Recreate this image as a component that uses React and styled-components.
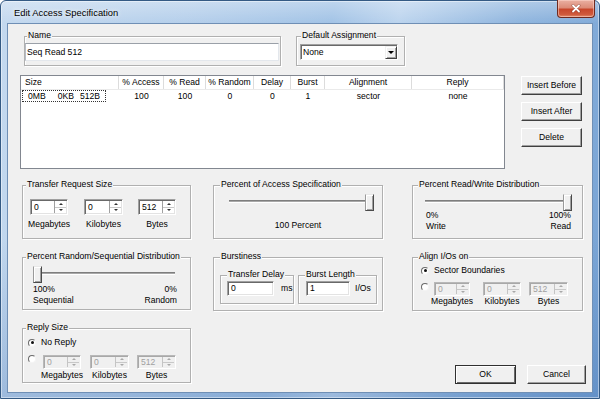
import React from "react";
import styled, { createGlobalStyle } from "styled-components";

const FONT = `"Liberation Sans", Arial, sans-serif`;

const GlobalStyle = createGlobalStyle`
  html, body { margin: 0; padding: 0; background: #ffffff; }
  body { font-family: ${FONT}; font-size: 8.6px; line-height: 11px; color: #000; }
  #root { width: 600px; height: 399px; overflow: hidden; }
  *, *::before, *::after { box-sizing: border-box; }
`;

const Window = styled.div`
  width: 600px;
  height: 399px;
  display: flex;
  flex-direction: column;
  border: 1px solid #345a84;
  border-radius: 6px 6px 0 0;
  padding: 0 7px 6px;
  box-shadow: inset 0 0 0 1px rgba(255, 255, 255, 0.45);
  background:
    linear-gradient(180deg, rgba(255,255,255,0.3) 0px, rgba(255,255,255,0) 22px, rgba(40,90,160,0) 60%, rgba(40,90,160,0.22) 100%),
    linear-gradient(100deg, #c4d9ef 0%, #b5cfeb 28%, #a2c3e6 50%, #bcd4ee 60%, #8fb5de 78%, #75a1d3 100%);
`;

const TitleBar = styled.div`
  height: 23px;
  display: flex;
  align-items: flex-start;
  justify-content: space-between;
`;

const Title = styled.span`
  font-family: ${FONT};
  font-size: 9.4px;
  line-height: 12px;
  padding: 6px 0 0 6px;
  color: #000;
  text-shadow: 0 0 4px rgba(255, 255, 255, 0.9), 0 0 8px rgba(255, 255, 255, 0.7);
`;

const CloseButton = styled.div`
  width: 38px;
  height: 18px;
  margin: -1px -3px 0 0;
  border: 1px solid #6e2a20;
  border-top: none;
  border-radius: 0 0 4px 4px;
  background: linear-gradient(180deg, #eab0a2 0%, #dc8c78 45%, #c8472c 55%, #cf5a3c 85%, #e38c6c 100%);
  box-shadow: inset 0 0 0 1px rgba(255, 220, 210, 0.5);
  display: flex;
  align-items: center;
  justify-content: center;
`;

const Client = styled.div`
  flex: 1;
  background: #f0f0f0;
  box-shadow: 0 0 0 1px #6f8fb5;
  display: flex;
  flex-direction: column;
`;

const TopRow = styled.div`
  display: flex;
  gap: 15px;
  margin: 12px 0 0 16px;
`;

const GroupBox = styled.div`
  position: relative;
  flex-shrink: 0;
  width: ${(p) => p.$w}px;
  height: ${(p) => p.$h}px;
  border: 1px solid #b0b0b0;
  box-shadow: 1px 1px 0 #ffffff, inset 1px 1px 0 #ffffff;
  padding: ${(p) => p.$pad || "0"};
  display: flex;
  flex-direction: column;
`;

const Caption = styled.span`
  position: absolute;
  top: -7px;
  left: ${(p) => p.$x}px;
  padding: 0 1px;
  background: #f0f0f0;
  line-height: 11px;
  white-space: nowrap;
`;

const TextInput = styled.div`
  width: ${(p) => p.$w}px;
  height: ${(p) => p.$h}px;
  flex-shrink: 0;
  background: #ffffff;
  border: 1px solid;
  border-color: #9aa0a8 #e3e7ec #e3e7ec #b7bcc4;
  padding-left: ${(p) => p.$pl ?? 1}px;
  display: flex;
  align-items: center;
  white-space: nowrap;
`;

const SunkenInput = styled.div`
  width: ${(p) => p.$w}px;
  height: ${(p) => p.$h}px;
  flex-shrink: 0;
  background: #ffffff;
  border: 1px solid;
  border-color: #a0a0a0 #ffffff #ffffff #a0a0a0;
  box-shadow: inset 1px 1px 0 #696969, inset -1px -1px 0 #e3e3e3;
  padding-left: 3px;
  display: flex;
  align-items: center;
`;

const Select = styled.div`
  width: ${(p) => p.$w}px;
  height: ${(p) => p.$h}px;
  display: flex;
  background: #ffffff;
  border: 1px solid;
  border-color: #a0a0a0 #ffffff #ffffff #a0a0a0;
  box-shadow: inset 1px 1px 0 #696969;
`;

const SelectValue = styled.span`
  flex: 1;
  padding-left: 2px;
  display: flex;
  align-items: center;
`;

const DropButton = styled.span`
  width: 12px;
  margin: 1px 0 0 0;
  background: #f0f0f0;
  border: 1px solid;
  border-color: #f0f0f0 #404040 #404040 #f0f0f0;
  box-shadow: inset 1px 1px 0 #ffffff, inset -1px -1px 0 #a0a0a0;
  display: flex;
  align-items: center;
  justify-content: center;
  &::after {
    content: "";
    border-left: 3px solid transparent;
    border-right: 3px solid transparent;
    border-top: 3px solid #000;
  }
`;

const MiddleRow = styled.div`
  display: flex;
  gap: 16px;
  margin: 9px 0 0 12px;
`;

const ListView = styled.div`
  width: 485px;
  height: 94px;
  flex-shrink: 0;
  background: #ffffff;
  border: 1px solid #828790;
  display: flex;
  flex-direction: column;
`;

const HeaderRow = styled.div`
  display: flex;
  height: 14px;
  border-bottom: 1px solid #eaeaea;
`;

const HeaderCell = styled.div`
  width: ${(p) => p.$w}px;
  flex-shrink: 0;
  border-right: 1px solid #dcdcdc;
  text-align: ${(p) => (p.$left ? "left" : "center")};
  padding-left: ${(p) => (p.$left ? 4 : 0)}px;
  line-height: 13px;
  white-space: nowrap;
`;

const DataRow = styled.div`
  display: flex;
  height: 12px;
  align-items: center;
`;

const DataCell = styled.div`
  width: ${(p) => p.$w}px;
  flex-shrink: 0;
  text-align: center;
  white-space: nowrap;
`;

const FocusCell = styled.div`
  width: 84px;
  height: 12px;
  margin: 0 13px 0 1px;
  border: 1px dotted #333;
  display: flex;
  align-items: center;
  padding-left: 5px;
  flex-shrink: 0;
`;

const SizePart = styled.span`
  margin-right: ${(p) => p.$mr}px;
`;

const ButtonStack = styled.div`
  display: flex;
  flex-direction: column;
  gap: 7px;
  margin-top: 1px;
`;

const Button = styled.div`
  width: ${(p) => p.$w}px;
  height: 19px;
  background: #f0f0f0;
  border: 1px solid;
  border-color: ${(p) => (p.$default ? "#303030" : "#ffffff #404040 #404040 #ffffff")};
  box-shadow: ${(p) =>
    p.$default
      ? "inset 1px 1px 0 #ffffff, inset -1px -1px 0 #696969"
      : "inset -1px -1px 0 #a0a0a0"};
  display: flex;
  align-items: center;
  justify-content: center;
  white-space: nowrap;
`;

const Lower = styled.div`
  flex: 1;
  display: flex;
  margin: 16px 0 0 14px;
  padding-bottom: 8px;
`;

const Column = styled.div`
  width: ${(p) => p.$w}px;
  margin-left: ${(p) => p.$ml || 0}px;
  display: flex;
  flex-direction: column;
  gap: 18px;
  flex-shrink: 0;
`;

const SpinRow = styled.div`
  display: flex;
  align-items: flex-start;
  gap: ${(p) => p.$gap || 0}px;
  margin-top: ${(p) => p.$mt || 0}px;
`;

const SpinField = styled.div`
  display: flex;
  flex-direction: column;
  align-items: center;
  width: ${(p) => p.$w}px;
  flex-shrink: 0;
  margin-left: ${(p) => p.$ml || 0}px;
`;

const SpinBox = styled.div`
  width: ${(p) => p.$w}px;
  height: ${(p) => p.$h}px;
  display: flex;
  background: ${(p) => (p.$disabled ? "#f0f0f0" : "#ffffff")};
  border: 1px solid;
  border-color: ${(p) => (p.$disabled ? "#b8b8b8 #ffffff #ffffff #b8b8b8" : "#a0a0a0 #ffffff #ffffff #a0a0a0")};
  box-shadow: ${(p) =>
    p.$disabled ? "inset 1px 1px 0 #a8a8a8" : "inset 1px 1px 0 #696969, inset -1px -1px 0 #e3e3e3"};
`;

const SpinValue = styled.span`
  flex: 1;
  padding-left: 3px;
  display: flex;
  align-items: center;
  color: ${(p) => (p.$disabled ? "#a0a0a0" : "#000")};
`;

const SpinButtons = styled.div`
  width: 12px;
  margin: 1px 1px 1px 0;
  display: flex;
  flex-direction: column;
  border-left: 1px solid ${(p) => (p.$disabled ? "#c4c4c4" : "#a0a0a0")};
`;

const SpinArrow = styled.span`
  flex: 1;
  display: flex;
  align-items: center;
  justify-content: center;
  border-bottom: ${(p) => (p.$up ? "1px solid #c8c8c8" : "none")};
  &::after {
    content: "";
    border-left: 2px solid transparent;
    border-right: 2px solid transparent;
    ${(p) => (p.$up ? "border-bottom" : "border-top")}: 2px solid ${(p) => (p.$disabled ? "#a8a8a8" : "#303030")};
  }
`;

const FieldLabel = styled.span`
  margin-top: ${(p) => p.$mt || 0}px;
  white-space: nowrap;
`;

const SliderWrap = styled.div`
  position: relative;
  width: ${(p) => p.$w}px;
  height: 17px;
  margin-left: ${(p) => p.$ml}px;
  flex-shrink: 0;
`;

const Track = styled.div`
  position: absolute;
  left: 4px;
  right: 4px;
  top: 6px;
  height: 3px;
  border-top: 1px solid #7e7e7e;
  background: #a8a8a8;
  border-bottom: 1px solid #ffffff;
`;

const Thumb = styled.div`
  position: absolute;
  top: 0;
  width: 9px;
  height: 17px;
  background: #f0f0f0;
  border: 1px solid;
  border-color: #e8e8e8 #4a4a4a #4a4a4a #9a9a9a;
  box-shadow: inset 1px 1px 0 #ffffff, inset -1px -1px 0 #a0a0a0;
`;

const CenterLabel = styled.div`
  text-align: center;
  margin-top: ${(p) => p.$mt || 0}px;
`;

const EndLabels = styled.div`
  display: flex;
  justify-content: space-between;
  margin-top: ${(p) => p.$mt || 0}px;
  padding: ${(p) => p.$pad};
`;

const LabelStack = styled.div`
  display: flex;
  flex-direction: column;
  align-items: ${(p) => (p.$right ? "flex-end" : "flex-start")};
`;

const InnerRow = styled.div`
  display: flex;
  gap: ${(p) => p.$gap || 0}px;
`;

const UnitRow = styled.div`
  display: flex;
  align-items: center;
`;

const Unit = styled.span`
  margin-left: ${(p) => p.$ml}px;
  white-space: nowrap;
`;

const RadioRow = styled.div`
  display: flex;
  align-items: center;
  height: 11px;
  gap: 5px;
`;

const Radio = styled.span`
  width: 8px;
  height: 8px;
  flex-shrink: 0;
  border-radius: 50%;
  border: 1px solid;
  border-color: ${(p) => (p.$disabled ? "#a8a8a8 #f4f4f4 #f4f4f4 #a8a8a8" : "#6a6a6a #f4f4f4 #f4f4f4 #6a6a6a")};
  background: ${(p) => (p.$disabled ? "#f0f0f0" : "#ffffff")};
  display: flex;
  align-items: center;
  justify-content: center;
  margin-top: ${(p) => p.$mt || 0}px;
  &::after {
    content: "";
    width: 3px;
    height: 3px;
    border-radius: 50%;
    background: ${(p) => (p.$checked ? "#111" : "transparent")};
  }
`;

const DialogButtons = styled.div`
  margin-top: auto;
  display: flex;
  justify-content: flex-end;
  gap: 11px;
  margin-right: -3px;
`;

function Spinner({ value, w, h, disabled }) {
  return (
    <SpinBox $w={w} $h={h} $disabled={disabled}>
      <SpinValue $disabled={disabled}>{value}</SpinValue>
      <SpinButtons $disabled={disabled}>
        <SpinArrow $up $disabled={disabled} />
        <SpinArrow $disabled={disabled} />
      </SpinButtons>
    </SpinBox>
  );
}

function Slider({ w, ml, value }) {
  const left = Math.round((value / 100) * (w - 9));
  return (
    <SliderWrap $w={w} $ml={ml}>
      <Track />
      <Thumb style={{ left }} />
    </SliderWrap>
  );
}

const columns = [
  { key: "size", label: "Size", w: 98, left: true },
  { key: "access", label: "% Access", w: 45 },
  { key: "read", label: "% Read", w: 42 },
  { key: "random", label: "% Random", w: 48 },
  { key: "delay", label: "Delay", w: 37 },
  { key: "burst", label: "Burst", w: 34 },
  { key: "align", label: "Alignment", w: 87 },
  { key: "reply", label: "Reply", w: 92 },
];

const row = { access: "100", read: "100", random: "0", delay: "0", burst: "1", align: "sector", reply: "none" };

function SizeFields({ h, disabled, widths, gaps, labelGap }) {
  const names = [
    ["Megabytes", "0"],
    ["Kilobytes", "0"],
    ["Bytes", "512"],
  ];
  return names.map(([label, value], i) => (
    <SpinField key={label} $w={widths[i]} $ml={gaps[i]}>
      <Spinner value={value} w={widths[i]} h={h} disabled={disabled} />
      <FieldLabel $mt={labelGap}>{label}</FieldLabel>
    </SpinField>
  ));
}

export default function App() {
  return (
    <>
      <GlobalStyle />
      <Window>
        <TitleBar>
          <Title>Edit Access Specification</Title>
          <CloseButton aria-label="Close">
            <svg width="10" height="9" viewBox="0 0 10 9">
              <path d="M2 1.5 L8 7.5 M8 1.5 L2 7.5" stroke="#5a1a10" strokeWidth="3" strokeLinecap="round" opacity="0.45" />
              <path d="M2 1.5 L8 7.5 M8 1.5 L2 7.5" stroke="#ffffff" strokeWidth="1.8" strokeLinecap="round" />
            </svg>
          </CloseButton>
        </TitleBar>
        <Client>
          <TopRow>
            <GroupBox $w={257} $h={30} $pad="6px 0 0 0">
              <Caption $x={2}>Name</Caption>
              <TextInput $w={254} $h={18} $pl={1}>Seq Read 512</TextInput>
            </GroupBox>
            <GroupBox $w={109} $h={30} $pad="7px 0 0 3px">
              <Caption $x={4}>Default Assignment</Caption>
              <Select $w={98} $h={16}>
                <SelectValue>None</SelectValue>
                <DropButton />
              </Select>
            </GroupBox>
          </TopRow>

          <MiddleRow>
            <ListView>
              <HeaderRow>
                {columns.map((c) => (
                  <HeaderCell key={c.key} $w={c.w} $left={c.left}>
                    {c.label}
                  </HeaderCell>
                ))}
              </HeaderRow>
              <DataRow>
                <FocusCell>
                  <SizePart $mr={12}>0MB</SizePart>
                  <SizePart $mr={6}>0KB</SizePart>
                  <SizePart $mr={0}>512B</SizePart>
                </FocusCell>
                {columns.slice(1).map((c) => (
                  <DataCell key={c.key} $w={c.w}>
                    {row[c.key]}
                  </DataCell>
                ))}
              </DataRow>
            </ListView>
            <ButtonStack>
              <Button $w={61}>Insert Before</Button>
              <Button $w={61}>Insert After</Button>
              <Button $w={61}>Delete</Button>
            </ButtonStack>
          </MiddleRow>

          <Lower>
            <Column $w={169}>
              <GroupBox $w={169} $h={54} $pad="13px 0 0 0">
                <Caption $x={3}>Transfer Request Size</Caption>
                <SpinRow>
                  <SizeFields h={16} widths={[38, 39, 38]} gaps={[7, 16, 15]} labelGap={4} />
                </SpinRow>
              </GroupBox>
              <GroupBox $w={169} $h={53} $pad="8px 0 0 0">
                <Caption $x={3}>Percent Random/Sequential Distribution</Caption>
                <Slider w={146} ml={10} value={0} />
                <EndLabels $mt={1} $pad="0 13px 0 10px">
                  <LabelStack>
                    <span>100%</span>
                    <span>Sequential</span>
                  </LabelStack>
                  <LabelStack $right>
                    <span>0%</span>
                    <span>Random</span>
                  </LabelStack>
                </EndLabels>
              </GroupBox>
              <GroupBox $w={169} $h={55} $pad="8px 0 0 5px">
                <Caption $x={3}>Reply Size</Caption>
                <RadioRow>
                  <Radio $checked />
                  <span>No Reply</span>
                </RadioRow>
                <SpinRow $mt={7}>
                  <Radio $mt={0} />
                  <SizeFields h={14} disabled widths={[38, 39, 39]} gaps={[7, 9, 8]} labelGap={1} />
                </SpinRow>
              </GroupBox>
            </Column>

            <Column $w={170} $ml={22}>
              <GroupBox $w={170} $h={54} $pad="8px 0 0 0">
                <Caption $x={6}>Percent of Access Specification</Caption>
                <Slider w={149} ml={11} value={100} />
                <CenterLabel $mt={9}>100 Percent</CenterLabel>
              </GroupBox>
              <GroupBox $w={170} $h={54} $pad="17px 0 0 6px">
                <Caption $x={6}>Burstiness</Caption>
                <InnerRow $gap={4}>
                  <GroupBox $w={74} $h={29} $pad="5px 0 0 6px">
                    <Caption $x={6}>Transfer Delay</Caption>
                    <UnitRow>
                      <SunkenInput $w={47} $h={15}>0</SunkenInput>
                      <Unit $ml={7}>ms</Unit>
                    </UnitRow>
                  </GroupBox>
                  <GroupBox $w={79} $h={29} $pad="5px 0 0 7px">
                    <Caption $x={6}>Burst Length</Caption>
                    <UnitRow>
                      <SunkenInput $w={44} $h={15}>1</SunkenInput>
                      <Unit $ml={5}>I/Os</Unit>
                    </UnitRow>
                  </GroupBox>
                </InnerRow>
              </GroupBox>
            </Column>

            <Column $w={171} $ml={29}>
              <GroupBox $w={171} $h={54} $pad="8px 0 0 0">
                <Caption $x={5}>Percent Read/Write Distribution</Caption>
                <Slider w={151} ml={8} value={100} />
                <EndLabels $mt={-1} $pad="0 11px 0 13px">
                  <LabelStack>
                    <span>0%</span>
                    <span>Write</span>
                  </LabelStack>
                  <LabelStack $right>
                    <span>100%</span>
                    <span>Read</span>
                  </LabelStack>
                </EndLabels>
              </GroupBox>
              <GroupBox $w={171} $h={54} $pad="7px 0 0 8px">
                <Caption $x={5}>Align I/Os on</Caption>
                <RadioRow>
                  <Radio $checked />
                  <span>Sector Boundaries</span>
                </RadioRow>
                <SpinRow $mt={6}>
                  <Radio $mt={1} />
                  <SizeFields h={14} disabled widths={[36, 38, 39]} gaps={[5, 13, 8]} labelGap={0} />
                </SpinRow>
              </GroupBox>
              <DialogButtons>
                <Button $w={61} $default>OK</Button>
                <Button $w={59}>Cancel</Button>
              </DialogButtons>
            </Column>
          </Lower>
        </Client>
      </Window>
    </>
  );
}
